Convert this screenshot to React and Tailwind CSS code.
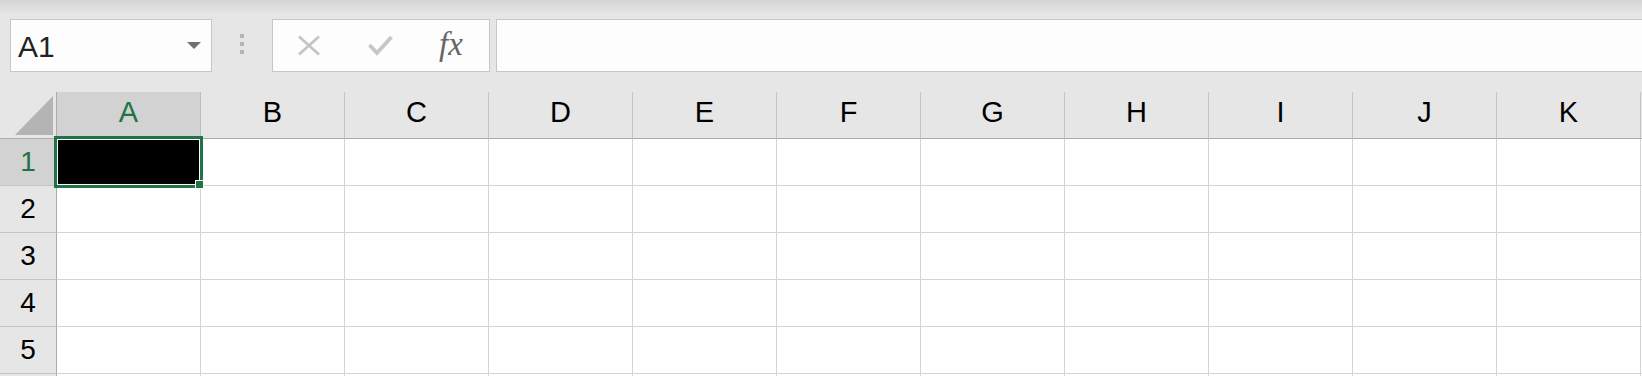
import React from "react";

const COLUMNS = ["A", "B", "C", "D", "E", "F", "G", "H", "I", "J", "K", ""];
const ROWS = [1, 2, 3, 4, 5, ""];

const CancelIcon = () => (
  <svg width="24" height="21" viewBox="0 0 24 21" fill="none">
    <path d="M2 1.5 L22 19.5 M22 1.5 L2 19.5" stroke="#c4c4c4" strokeWidth="2.8" />
  </svg>
);

const EnterIcon = () => (
  <svg width="25" height="21" viewBox="0 0 25 21" fill="none">
    <path d="M1.5 10 L9 18 L23.5 2" stroke="#c6c6c6" strokeWidth="3.8" />
  </svg>
);

const FormulaBar = () => (
  <div className="h-[92px] flex items-start pt-[19px] pl-[10px] bg-[linear-gradient(to_bottom,#d4d4d4_0px,#e6e6e6_14px)]">
    {/* name box */}
    <div className="w-[202px] h-[53px] shrink-0 flex items-center justify-between pl-[7px] pr-[10px] bg-[#fdfdfd] border border-[#c6c6c6]">
      <span className="text-[30px] leading-none text-[#222] pt-[3px]">A1</span>
      <svg width="14" height="7" viewBox="0 0 14 7">
        <polygon points="0,0 14,0 7,7" fill="#707070" />
      </svg>
    </div>

    {/* grip dots */}
    <div className="shrink-0 ml-[28px] mt-[15px] flex flex-col gap-[4px]">
      <div className="w-[4px] h-[4px] bg-[#b3b3b3]" />
      <div className="w-[4px] h-[4px] bg-[#b3b3b3]" />
      <div className="w-[4px] h-[4px] bg-[#b3b3b3]" />
    </div>

    {/* cancel / enter / insert function */}
    <div className="ml-[28px] w-[218px] h-[53px] shrink-0 flex items-center pl-[24px] bg-[#fdfdfd] border border-[#c6c6c6]">
      <CancelIcon />
      <div className="ml-[47px]">
        <EnterIcon />
      </div>
      <span className="ml-[46px] font-['Liberation_Serif',serif] italic text-[33px] leading-none text-[#666] pb-[2px]">
        fx
      </span>
    </div>

    {/* formula input */}
    <div className="ml-[6px] w-[1180px] h-[53px] shrink-0 bg-[#fdfdfd] border border-[#c6c6c6]" />
  </div>
);

const HeaderRow = () => (
  <div className="flex h-[47px]">
    <div className="w-[57px] h-[47px] shrink-0 border-r border-b border-[#ababab] bg-[#e6e6e6]">
      <svg width="56" height="46" viewBox="0 0 56 46">
        <polygon points="15,43 53,43 53,4" fill="#b4b4b4" />
      </svg>
    </div>
    {COLUMNS.map((col, i) => (
      <div
        key={i}
        className={
          col === "A"
            ? "w-[144px] h-[47px] shrink-0 flex items-center justify-center pb-[4px] border-r border-b border-r-[#bdbdbd] border-b-[#ababab] bg-[#d2d2d2] text-[#217346] text-[29px]"
            : "w-[144px] h-[47px] shrink-0 flex items-center justify-center pb-[4px] border-r border-b border-r-[#c4c4c4] border-b-[#ababab] bg-[#e6e6e6] text-black text-[29px]"
        }
      >
        {col}
      </div>
    ))}
  </div>
);

const Selection = () => (
  <>
    <div className="absolute -left-[3px] -top-[3px] w-[149px] h-[52px] border-[3px] border-[#217346] z-10">
      <div className="w-full h-full border border-white bg-black" />
    </div>
    <div className="absolute left-[138px] top-[41px] w-[9px] h-[9px] bg-[#217346] border border-white z-20" />
  </>
);

const GridRow = ({ row }) => (
  <div className="flex h-[47px]">
    <div
      className={
        row === 1
          ? "w-[57px] h-[47px] shrink-0 flex items-center justify-center border-r border-b border-r-[#ababab] border-b-[#c4c4c4] bg-[#d2d2d2] text-[#217346] text-[28px]"
          : "w-[57px] h-[47px] shrink-0 flex items-center justify-center border-r border-b border-r-[#ababab] border-b-[#c4c4c4] bg-[#e6e6e6] text-black text-[28px]"
      }
    >
      {row}
    </div>
    {COLUMNS.map((col, i) => (
      <div
        key={i}
        className="relative w-[144px] h-[47px] shrink-0 border-r border-b border-[#d4d4d4] bg-white"
      >
        {row === 1 && col === "A" && <Selection />}
      </div>
    ))}
  </div>
);

export default function App() {
  return (
    <div className="w-[1642px] h-[376px] overflow-hidden bg-[#e6e6e6] font-['Liberation_Sans',sans-serif]">
      <FormulaBar />
      <HeaderRow />
      {ROWS.map((row, i) => (
        <GridRow key={i} row={row} />
      ))}
    </div>
  );
}
